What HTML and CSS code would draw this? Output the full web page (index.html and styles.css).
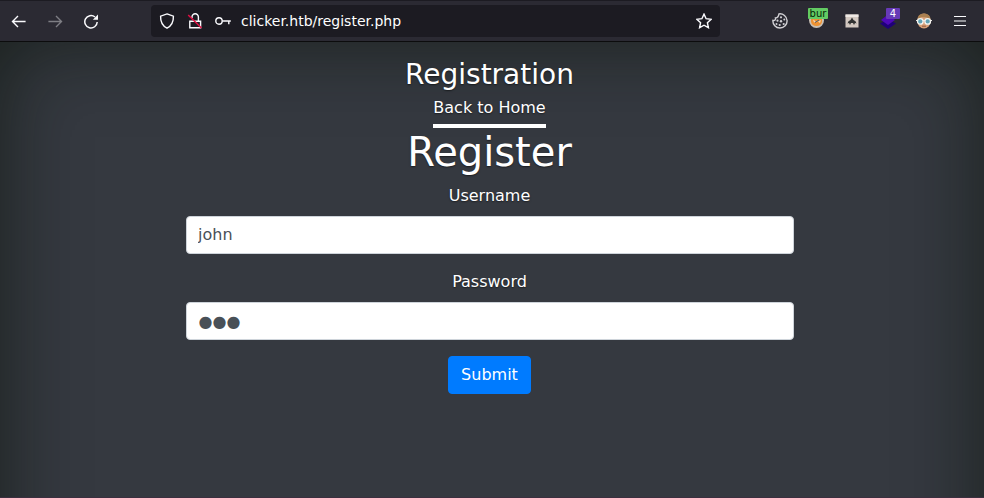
FILE: index.html
```html
<!DOCTYPE html>
<html lang="en">
<head>
<meta charset="utf-8">
<title>Register</title>
<link rel="stylesheet" href="styles.css">
</head>
<body>
<header class="toolbar">
  <nav class="nav-buttons">
    <svg class="icon" viewBox="0 0 16 16"><path d="M14.600 8.500H1.600M7 3 1.500 8.500 7 14" stroke-width="1.400"/></svg>
    <svg class="icon dim" viewBox="0 0 16 16"><path d="M1.400 8.500h13M9 3l5.500 5.500L9 14" stroke-width="1.400"/></svg>
    <svg class="icon" viewBox="0 0 16 16"><path d="M14.200 9A6.200 6.200 0 1 1 12 4" stroke-width="1.500"/><path class="solid" d="M15 1.500v5.200H9.800z"/></svg>
  </nav>
  <div class="urlbar">
    <svg class="icon shield" viewBox="0 0 16 16"><path d="M8 .9 14.400 3.200c.2 5-1.200 9.200-6.400 12C2.800 12.400 1.400 8.200 1.600 3.200z" stroke-width="1.400"/></svg>
    <svg class="icon lock" viewBox="0 0 16 16"><path d="M5 5V4a3.200 3.200 0 0 1 6.400 0v4M2.800 8.300h10.800v6.500H2.800z" stroke-width="1.400"/><path class="slash" d="m1.200 2 13.300 13"/></svg>
    <svg class="icon key" viewBox="0 0 16 16"><circle cx="4" cy="8" r="3.200" stroke-width="1.400"/><path d="M7.200 8h8.600M13.800 8v3.200" stroke-width="1.400"/></svg>
    <span class="url">clicker.htb/register.php</span>
    <svg class="icon star" viewBox="0 0 16 16"><path d="m8 1.100 2.100 4.600 5 .6-3.700 3.400 1 5L8 12.200l-4.400 2.500 1-5L.9 6.300l5-.6z" stroke-width="1.400"/></svg>
  </div>
  <div class="extensions">
    <svg class="icon cookie" viewBox="0 0 16 16"><path d="M7 .9a7.100 7.100 0 1 1-6.100 6.500c2 .5 2.900-.9 2.600-2.500 2 .2 3-1.300 3.500-4z" stroke-width="1.400"/><g class="solid"><circle cx="9" cy="4.300" r="1.100"/><circle cx="5.500" cy="7.700" r="1.100"/><circle cx="9" cy="8.300" r="1.200"/><circle cx="12.300" cy="6.600" r="1"/><circle cx="4.500" cy="10.900" r="1"/><circle cx="7.700" cy="12" r="1.100"/><circle cx="11.700" cy="11" r="1.100"/></g></svg>
    <span class="ext">
      <svg class="pic" viewBox="0 0 16 16"><circle cx="8.500" cy="7.500" r="7.500" fill="#c9bfb4"/><path d="M3 3h11v6q-1 4-5.500 4T3 9z" fill="#ef9232"/><path d="m5 6.500 3 2-2 1zm5 2 3-1.500-1 3z" fill="#f3d9bd"/><path d="M7 9.500 11 7" stroke="#4c6278"/></svg>
      <span class="badge green">bur</span>
    </span>
    <svg class="pic" viewBox="0 0 16 16"><rect x="1.500" y="1.500" width="13" height="13" fill="#d3c8c1"/><path d="M1.500 1.500h13V4h-13z" fill="#efe9e5"/><path d="M3.500 10.500Q4 7.500 6.500 7L8 4.500 9.500 7q2.500.5 3 3.500L11 10l-1 2-1-2H7l-1 2-1-2z" fill="#303131"/></svg>
    <span class="ext">
      <svg class="pic" viewBox="0 0 16 16"><path d="M8 6 16 10.500 8 16 0 10.500z" fill="#20007a"/><path d="M8 1.500 15 7 8 12 1 7z" fill="#4f09b8"/></svg>
      <span class="badge purple">4</span>
    </span>
    <svg class="pic face" viewBox="0 0 16 16"><ellipse cx="8" cy="8" rx="6.700" ry="7.500" fill="#d8a078"/><path d="M1.500 7Q1.200.5 8 .5t6.500 6.500L11 4.500 5 4z" fill="#aa8051"/><path d="M0 7.500h16" stroke="#e9e8e5"/><circle cx="4.300" cy="8.400" r="2.800" fill="#62a2b5" stroke="#f4f3ef" stroke-width="1.300"/><circle cx="11.700" cy="8.400" r="2.800" fill="#62a2b5" stroke="#f4f3ef" stroke-width="1.300"/><path d="M6 13.200h4" stroke="#8e573e"/></svg>
    <svg class="icon menu" viewBox="0 0 16 16"><path d="M2 3.500h12M2 8h12M2 12.500h12" stroke-width="1.200"/></svg>
  </div>
</header>
<main class="page">
  <div class="cover">
    <h3 class="brand">Registration</h3>
    <a class="home-link">Back to Home</a>
    <h1 class="heading">Register</h1>
    <form class="form">
      <label class="label" for="username">Username</label>
      <input class="control" id="username" type="text" value="john">
      <label class="label" for="password">Password</label>
      <input class="control dots" id="password" type="text" value="●●●">
      <button class="submit" type="button">Submit</button>
    </form>
  </div>
</main>
</body>
</html>
```
FILE: styles.css
```css
* { box-sizing: border-box; }
body {
  margin: 0;
  height: 498px;
  display: flex;
  flex-direction: column;
  overflow: hidden;
  font: 16px/1.5 "DejaVu Sans", sans-serif;
  color: #fff;
  background: #353940;
}
.toolbar {
  flex: none;
  height: 42px;
  display: flex;
  align-items: center;
  background: #2b2a33;
  border-top: 1px solid #1c1b22;
  border-bottom: 1px solid #0c0c0d;
}
.icon, .pic { width: 16px; height: 16px; flex: none; display: block; }
.icon { fill: none; stroke: #fbfbfe; }
.icon .solid { fill: #fbfbfe; stroke: none; }
.icon .slash { stroke: #e20f43; stroke-width: 1.5; }
.dim { opacity: .4; }
.nav-buttons { display: flex; gap: 20px; padding-left: 11px; width: 151px; }
.urlbar {
  width: 569px;
  height: 32px;
  display: flex;
  align-items: center;
  padding: 0 8px;
  background: #1c1b22;
  border-radius: 4px;
}
.lock { margin-left: 12px; }
.key { margin-left: 12px; }
.url { margin-left: 10px; flex: 1; font-size: 14px; line-height: 20px; }
.extensions {
  display: flex;
  gap: 20px;
  align-items: center;
  padding-left: 52px;
}
.cookie { stroke: #d2d1d5; }
.icon.cookie .solid { fill: #d2d1d5; }
.ext { position: relative; }
.badge {
  position: absolute;
  height: 11px;
  font-size: 10px;
  line-height: 11px;
  text-align: center;
  border-radius: 1px;
}
.green { left: 0; top: -5px; width: 20px; color: #062606; background: #63cb63; }
.purple { left: 6px; top: -5px; width: 14px; background: #673ab7; }
.page {
  position: relative;
  flex: 1;
  min-height: 0;
  overflow: hidden;
  padding: 16px 190px 0 186px;
  border-bottom: 1px solid #3b2f3f;
  text-shadow: 0 .8px 1.6px rgba(0, 0, 0, .5);
}
/* Vignette extends below the fold, so only the top and sides darken. */
.page::before {
  content: "";
  position: absolute;
  inset: 0 0 -100px;
  box-shadow: inset 0 0 80px rgba(8, 16, 6, .6);
}
.cover { position: relative; display: flex; flex-direction: column; align-items: center; }
.brand { margin: 0 1px 0 0; font-size: 28px; line-height: 1.2; font-weight: 400; }
.home-link { margin-right: 1px; padding: 4px 0; border-bottom: 4px solid #fff; }
.heading { margin: 0 1px 8px 0; font-size: 40px; line-height: 1.2; font-weight: 400; }
.form { width: 100%; display: flex; flex-direction: column; align-items: center; }
.label { margin: 0 1px 8px 0; }
.control {
  width: 100%;
  height: 38px;
  margin: 0 0 16px;
  padding: 6px 12px;
  font: inherit;
  color: #495057;
  background: #fff;
  border: 1px solid #ced4da;
  border-radius: 4px;
}
#username { padding-left: 11px; }
.dots { font-size: 16px; padding: 8px 11.5px 6px; }
.submit {
  height: 38px;
  width: 83px;
  margin-right: 1px;
  padding: 6px 12px;
  font: inherit;
  color: #fff;
  background: #007bff;
  border: 1px solid #007bff;
  border-radius: 4px;
}
```
